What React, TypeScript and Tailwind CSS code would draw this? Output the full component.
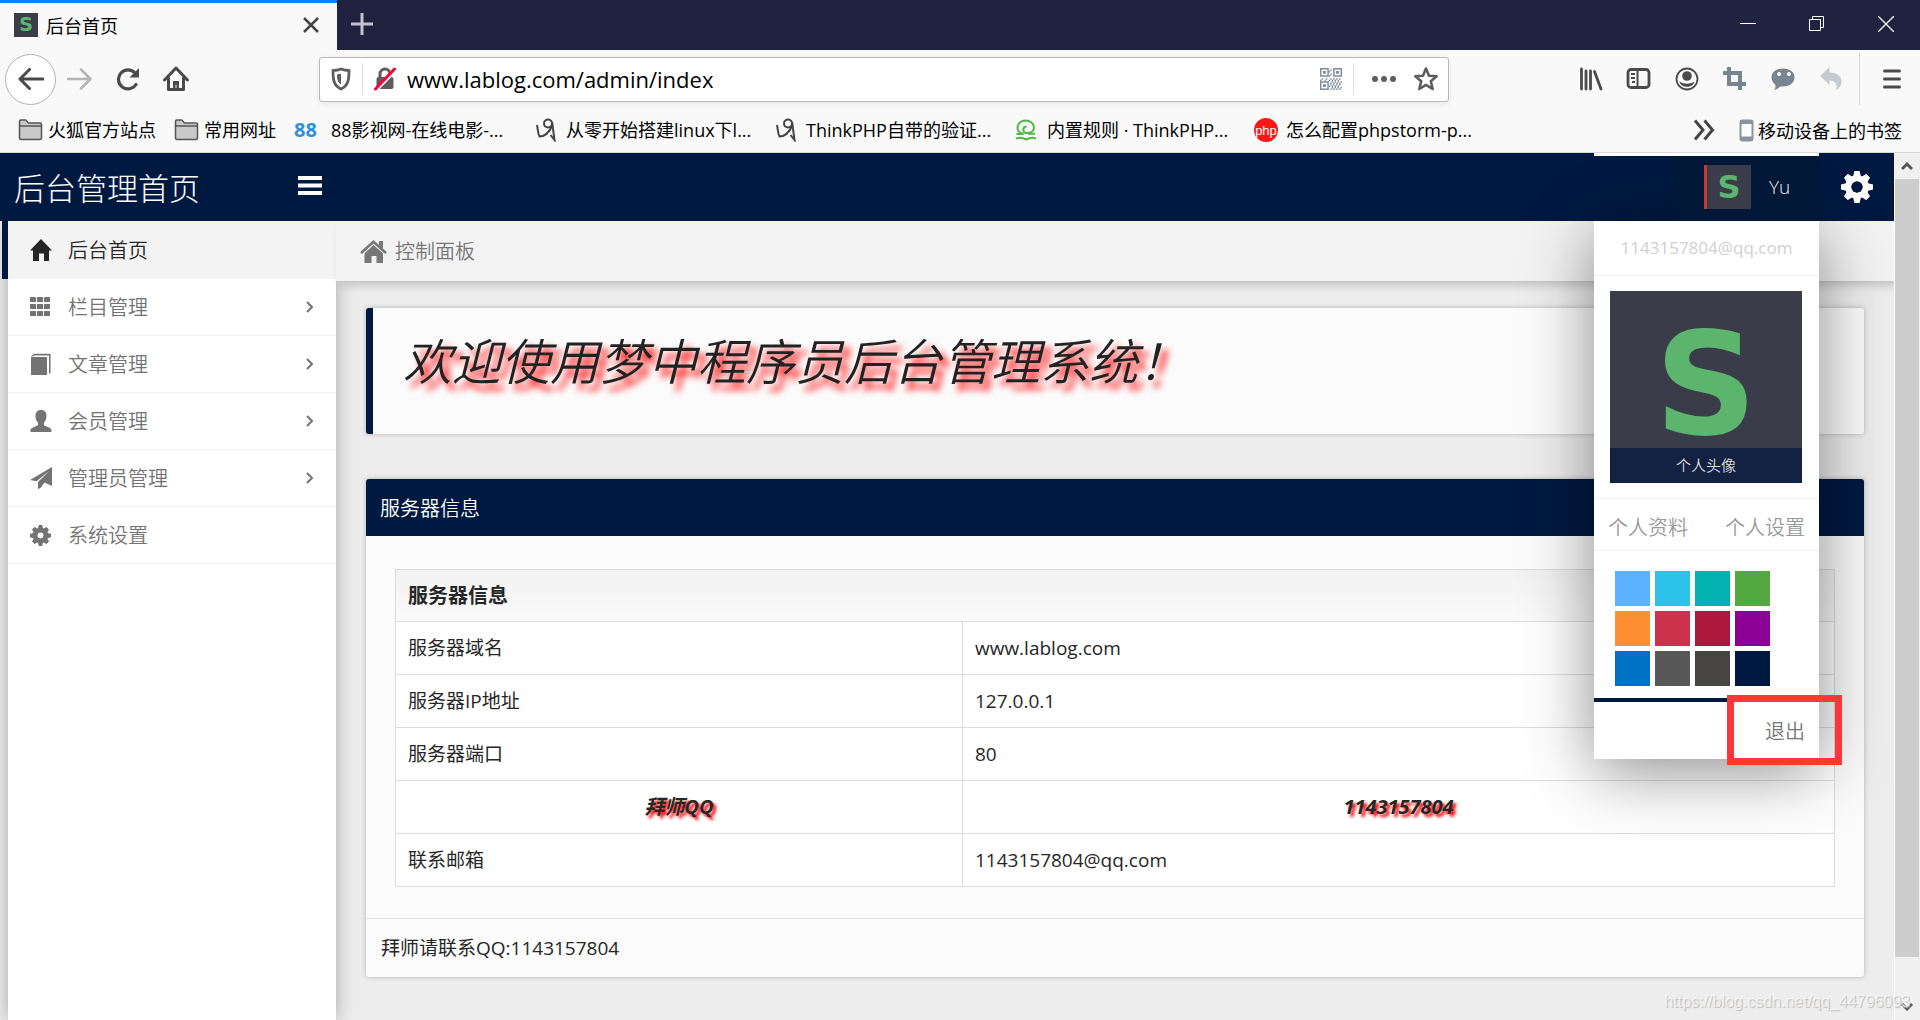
import type { ReactNode } from "react";

const latin = "font-['Open_Sans','Noto_Sans_CJK_SC',sans-serif]";

/* ---------- icons ---------- */

function Svg({ w, h, box, className, children }: { w: number; h: number; box?: string; className?: string; children: ReactNode }) {
  return (
    <svg width={w} height={h} viewBox={box ?? `0 0 ${w} ${h}`} className={className} fill="none" stroke="currentColor" aria-hidden="true">
      {children}
    </svg>
  );
}

function Gear({ size, hole }: { size: number; hole: number }) {
  return (
    <Svg w={size} h={size} box="-16 -16 32 32">
      <g fill="currentColor" stroke="none">
        {[0, 45, 90, 135].map((a) => (
          <path key={a} d="M-2.6-16h5.2l1.4 6V10l-1.4 6h-5.2L-4 10v-20z" transform={`rotate(${a})`} mask={`url(#hole${size})`} />
        ))}
      </g>
      <circle r={(11.8 + hole) / 2} strokeWidth={11.8 - hole} />
      <mask id={`hole${size}`} maskUnits="userSpaceOnUse" x="-16" y="-16" width="32" height="32">
        <rect x="-16" y="-16" width="32" height="32" fill="#fff" stroke="none" />
        <circle r={hole} fill="#000" stroke="none" />
      </mask>
    </Svg>
  );
}

const HomeSolid = () => (
  <Svg w={22} h={22}>
    <path d="M11 0l11 11.500h-3V22h-5v-7.500H9V22H3V11.500H0z" fill="currentColor" stroke="none" />
  </Svg>
);
const GridIcon = () => (
  <Svg w={22} h={22}>
    <g fill="currentColor" stroke="none">
      {[1, 8, 15].map((y) => [0, 7, 14].map((x) => <rect key={`${x}${y}`} x={x} y={y} width="6" height="5" rx="0.5" />))}
    </g>
  </Svg>
);
const BookIcon = () => (
  <Svg w={22} h={22}>
    <path d="M1 4h16v18H1zM1 3.500L4 .800h16.500v19l-1.500 1.200V2.500H4.500L2.500 3.500z" fill="currentColor" stroke="none" />
  </Svg>
);
const UserIcon = () => (
  <Svg w={22} h={22}>
    <path d="M11 0c3.500 0 5.500 2.300 5.500 6 0 3-.8 5-2.500 6.500V15c0 1 7.500 2.500 7.500 5v2H.5v-2C.5 17.500 8 16 8 15v-2.500C6.300 11 5.500 9 5.500 6c0-3.700 2-6 5.500-6z" fill="currentColor" stroke="none" />
  </Svg>
);
const PlaneIcon = () => (
  <Svg w={22} h={22}>
    <path d="M22 0v19l-7.500-3.500L10.500 21 8 22v-7L19 4 6.500 14.200 0 13z" fill="currentColor" stroke="none" />
  </Svg>
);
const Chevron = () => (
  <Svg w={8} h={12}>
    <path d="M1 1l5 5-5 5" strokeWidth="2" />
  </Svg>
);
const Folder = () => (
  <Svg w={25} h={22}>
    <path d="M1.500 6V2.500c0-.8.500-1.500 1.300-1.500h5c1 0 1.700 3 3 3H22c1 0 1.500.500 1.500 1.300V19c0 1-.5 1.500-1.500 1.500H3c-1 0-1.500-.5-1.500-1.500z" fill="#c9c9c9" stroke="#555" strokeWidth="1.500" />
    <path d="M1.500 7h22" stroke="#555" strokeWidth="1.500" />
  </Svg>
);
const FigureIcon = () => (
  <Svg w={22} h={24} className="text-[#444]">
    <circle cx="12" cy="5.500" r="4" strokeWidth="2" />
    <path d="M1 7c1 5 1 9 2.500 11.500C8 18.500 13 15 16.500 7l2 15-4-5" strokeWidth="2" />
  </Svg>
);
const Sprout = () => (
  <Svg w={22} h={22} className="text-[#4fb848]">
    <path d="M1.500 15H8.500C4.500 14 2.500 11 2.500 8.500 2.500 4.500 6 1.500 10.500 1.500S19 4.500 19 8.500 15.500 14 11.500 14 7 8 11.500 7.500" strokeWidth="2" />
    <path d="M1 19.500c4-1.500 7-.5 10 1 3-1.500 6-2.500 10-1M13 14.800h7" strokeWidth="2" />
  </Svg>
);
const Php = () => (
  <span className="flex size-6 items-center justify-center rounded-full bg-[#f81818] font-['Liberation_Sans',sans-serif] text-[13px] leading-none text-white">php</span>
);

/* ---------- logo tile ---------- */

function LogoTile({ className }: { className: string }) {
  return (
    <span className={`flex items-center justify-center bg-[#3b3c4a] font-['DejaVu_Sans',sans-serif] leading-none font-bold text-[#5bb56d] ${className}`}>S</span>
  );
}

/* ---------- browser window ---------- */

const bookmarks: { label: string; icon: ReactNode; width: string }[] = [
  { label: "火狐官方站点", icon: <Folder />, width: "w-[156px] gap-[5px]" },
  { label: "常用网址", icon: <Folder />, width: "w-[120px] gap-[5px]" },
  { label: "88影视网-在线电影-...", icon: <b className="text-xl font-bold text-[#2f8fdc]">88</b>, width: "w-[242px] gap-3.5" },
  { label: "从零开始搭建linux下l...", icon: <FigureIcon />, width: "w-[240px] gap-2" },
  { label: "ThinkPHP自带的验证...", icon: <FigureIcon />, width: "w-[239px] gap-2" },
  { label: "内置规则 · ThinkPHP...", icon: <Sprout />, width: "w-[239px] gap-2.5" },
  { label: "怎么配置phpstorm-p...", icon: <Php />, width: "w-[239px] gap-2" },
];

function IconButton({ label, children, className = "w-12" }: { label: string; children: ReactNode; className?: string }) {
  return (
    <button aria-label={label} className={`flex h-12 shrink-0 items-center justify-center ${className}`}>
      {children}
    </button>
  );
}

function TitleBar() {
  return (
    <div className="flex h-[50px] bg-[#202340] text-white">
      <div className="flex w-[337px] items-center border-t-3 border-[#0a84ff] bg-[#f9f9f9] pr-4.5 pb-1 pl-3.5 text-black">
        <LogoTile className="size-6 text-[19px]" />
        <span className="ml-2 flex-1 text-lg leading-6">后台首页</span>
        <button aria-label="关闭标签页">
          <Svg w={16} h={16} className="text-[#444]"><path d="M1 1l14 14M15 1L1 15" strokeWidth="2.500" /></Svg>
        </button>
      </div>
      <IconButton label="新建标签页" className="w-[50px]">
        <Svg w={22} h={22} className="text-[#c3c4cd]"><path d="M11 0v22M0 11h22" strokeWidth="3" /></Svg>
      </IconButton>
      <div className="ml-auto flex">
        <IconButton label="最小化" className="w-[69px]"><Svg w={16} h={16}><path d="M0 7.500h16" /></Svg></IconButton>
        <IconButton label="还原" className="w-[69px]"><Svg w={16} h={16}><path d="M.5 3.500h11v11H.5zM3.500 3.500v-3h11v11h-3" /></Svg></IconButton>
        <IconButton label="关闭" className="w-[69px]"><Svg w={16} h={16}><path d="M0 0l16 16M16 0L0 16" strokeWidth="1.300" /></Svg></IconButton>
      </div>
    </div>
  );
}

/* Three corner finders and a scatter of modules on a 15 x 15 field. */
const finders = [[0, 0], [9, 0], [0, 9]];
const modules = [[7, 1], [7, 4], [7, 7], [9, 7], [11, 7], [13, 7], [1, 7], [4, 7], [8, 9], [10, 9], [12, 9], [14, 9], [9, 11], [11, 11], [13, 11], [7, 11], [8, 13], [10, 13], [12, 13], [14, 13]];

function NavBar() {
  return (
    <div className="flex h-[58px] items-center pl-[5px] text-[#4a4a4a]">
      <button aria-label="后退" className="flex size-[51px] shrink-0 items-center justify-center rounded-full border border-[#b1b1b1] bg-white">
        <Svg w={26} h={22}><path d="M25 11H2M11.500 1.500L2 11l9.500 9.500" strokeWidth="3" strokeLinecap="round" strokeLinejoin="round" /></Svg>
      </button>
      <IconButton label="前进">
        <Svg w={26} h={22} className="text-[#b4b4b4]"><path d="M1 11h22M14 1.500l9.500 9.500-9.500 9.500" strokeWidth="2.500" strokeLinecap="round" strokeLinejoin="round" /></Svg>
      </IconButton>
      <IconButton label="刷新">
        <Svg w={24} h={24}><path d="M20 17.500A9.500 9.500 0 1 1 19 6" strokeWidth="3.200" strokeLinecap="round" /><path d="M23 1v9.500h-9.500z" fill="currentColor" stroke="none" /></Svg>
      </IconButton>
      <IconButton label="主页">
        <Svg w={26} h={26}><path d="M1.500 14L13 2l11.500 12M5.500 12v11.500h15V12" strokeWidth="3" strokeLinecap="round" strokeLinejoin="round" /><path d="M10 24v-9h6v9z" fill="currentColor" stroke="none" /><path d="M13 19v3" stroke="#fff" /></Svg>
      </IconButton>
      <div className="ml-[119px] flex h-[45px] w-[1130px] shrink items-center rounded-[3px] border border-[#b9b9b9] bg-white shadow-[0_2px_6px_rgba(0,0,0,0.07)]">
        <IconButton label="跟踪保护" className="w-[42px]">
          <Svg w={20} h={24} className="text-[#5d5d5d]"><path d="M10 2c3 1.300 5.500 1.500 8 1.500 0 9-.5 15-8 18.500C2.500 18.500 2 12.500 2 3.500c2.500 0 5-.2 8-1.500z" strokeWidth="2.800" strokeLinejoin="round" /><path d="M10 6.500v11C6.500 15 6 12 6 7.200 7.500 7.200 9 7 10 6.500z" fill="currentColor" stroke="none" /></Svg>
        </IconButton>
        <span className="h-8 w-px bg-[#dcdcdc]" />
        <IconButton label="站点信息" className="w-11">
          <Svg w={22} h={24} className="text-[#5d5d5d]"><path d="M6 11V7a5 5 0 0 1 10 0v4" strokeWidth="3" /><rect x="2.500" y="10" width="17" height="12" rx="2" fill="currentColor" stroke="none" /><path d="M2.500 23L22 3" stroke="#fff" strokeWidth="3" /><path d="M1.500 22L20.500 2" stroke="#ff0039" strokeWidth="3" strokeLinecap="round" /></Svg>
        </IconButton>
        <input aria-label="地址" defaultValue="www.lablog.com/admin/index" className={`min-w-0 flex-1 text-[22px] leading-8 text-black outline-none ${latin}`} />
        <IconButton label="二维码" className="w-11">
          <Svg w={22} h={22} box="0 0 15 15" className="text-[#7f8c9a]">
            <g fill="currentColor" stroke="none">
              {finders.map(([x, y]) => (
                <path key={`${x}-${y}`} fillRule="evenodd" d={`M${x} ${y}h6v6h-6zM${x + 1} ${y + 1}v4h4v-4zM${x + 2} ${y + 2}h2v2h-2z`} />
              ))}
              {modules.map(([x, y]) => (
                <path key={`${x}-${y}`} d={`M${x} ${y}h1v1h-1zM${x - 1} ${y + 1}h1v1h-1z`} />
              ))}
            </g>
          </Svg>
        </IconButton>
        <span className="h-8 w-px bg-[#dcdcdc]" />
        <IconButton label="页面操作" className="ml-2 w-11"><Svg w={24} h={8} className="text-[#5d5d5d]"><g fill="currentColor" stroke="none"><circle cx="3" cy="4" r="3" /><circle cx="12" cy="4" r="3" /><circle cx="21" cy="4" r="3" /></g></Svg></IconButton>
        <IconButton label="收藏" className="mr-0.5 w-10"><Svg w={26} h={26} className="text-[#5d5d5d]"><path d="M13 2.500l3 7.200 7.700.6-5.900 5 1.900 7.700-6.700-4.200L6.300 23l1.900-7.700-5.900-5L10 9.700z" strokeWidth="2.600" strokeLinejoin="round" /></Svg></IconButton>
      </div>
      <div className="ml-auto flex items-center">
        <IconButton label="书库"><Svg w={24} h={24}><path d="M2.500 2v20M7 4v18M11.500 4v18M15.500 4.500L22 22" strokeWidth="2.800" strokeLinecap="round" /></Svg></IconButton>
        <IconButton label="侧栏"><Svg w={26} h={24}><rect x="2" y="2.500" width="21" height="18" rx="3" strokeWidth="2.800" /><path d="M11.500 2v19" strokeWidth="2" /><path d="M5 7h4M5 11h4M6 15h3" strokeWidth="1.800" /></Svg></IconButton>
        <IconButton label="账户"><Svg w={24} h={24}><circle cx="12" cy="12" r="10.500" strokeWidth="1.800" /><circle cx="12" cy="9" r="4.800" fill="currentColor" stroke="none" /><path d="M4.500 14.500c5 3 10 3 15 0-1.500 7-13.500 7-15 0z" fill="currentColor" stroke="none" /></Svg></IconButton>
        <IconButton label="截图"><Svg w={24} h={24} className="text-[#778592]"><path d="M0 6h17v17M6 0v17h17" strokeWidth="4" /></Svg></IconButton>
        <IconButton label="聊天"><Svg w={24} h={24} className="text-[#778592]"><path d="M12 1.500c7 0 11.500 3.600 11.500 8.800S19 19.500 12 19.500c-1 0-2 0-3 0-1.500 1.700-3.500 3-6 3.500 1.300-1.500 1.700-3 1.500-5C2 16 .5 13.500.5 10.300.5 5.100 5 1.500 12 1.500z" fill="currentColor" stroke="none" /><circle cx="8" cy="7" r="2" fill="#fff" stroke="none" /><circle cx="18" cy="7" r="2" fill="#fff" stroke="none" /></Svg></IconButton>
        <IconButton label="撤销"><Svg w={24} h={24} className="text-[#c6cbd0]"><path d="M1 9l9.500-9v5.500C18 5.500 22.500 9 22.500 15c0 3.500-2 6.500-5.500 8 2-6-1-9.500-6.500-9.500V18z" fill="currentColor" stroke="none" /></Svg></IconButton>
        <span className="mx-1 h-[52px] w-px bg-[#dcdcdc]" />
        <IconButton label="菜单" className="w-14"><Svg w={18} h={20}><path d="M1.500 2h15M1.500 10h15M1.500 18h15" strokeWidth="3" strokeLinecap="round" /></Svg></IconButton>
      </div>
    </div>
  );
}

function BookmarksBar() {
  return (
    <div className="flex h-[45px] items-center border-b border-[#d9d9d9] pr-4.5 pl-4.5 text-lg leading-6 whitespace-nowrap text-black">
      {bookmarks.map((b) => (
        <a key={b.label} href="#" className={`flex items-center ${b.width} ${latin}`}>
          {b.icon}
          <span>{b.label}</span>
        </a>
      ))}
      <button aria-label="更多书签" className="ml-auto"><Svg w={22} h={22} className="text-[#444]"><path d="M2 1.500l8 9.500-8 9.500M11.500 1.500l8 9.500-8 9.500" strokeWidth="3" /></Svg></button>
      <a href="#" className="ml-6 flex items-center gap-1">
        <Svg w={15} h={23} className="text-[#8b949c]"><rect x="1.500" y="1.500" width="12" height="20" rx="2" strokeWidth="2" fill="#fff" /><path d="M1 3h13M1 19.500h13" strokeWidth="4" /></Svg>
        移动设备上的书签
      </a>
    </div>
  );
}

/* ---------- admin page ---------- */

const menu = [
  { label: "后台首页", icon: <HomeSolid />, active: true, more: false },
  { label: "栏目管理", icon: <GridIcon />, active: false, more: true },
  { label: "文章管理", icon: <BookIcon />, active: false, more: true },
  { label: "会员管理", icon: <UserIcon />, active: false, more: true },
  { label: "管理员管理", icon: <PlaneIcon />, active: false, more: true },
  { label: "系统设置", icon: <Gear size={21} hole={5} />, active: false, more: false },
];

function Sidebar() {
  return (
    <nav className="ml-2 w-[328px] shrink-0 bg-white text-xl leading-7 font-[350] text-[#737373] shadow-[0_0_18px_rgba(0,0,0,0.3)]">
      {menu.map((m) => (
        <a
          key={m.label}
          href="#"
          className={
            m.active
              ? "relative flex h-[58px] items-center bg-[#f3f3f3] pl-[22px] text-[#262626] before:absolute before:inset-y-0 before:-left-1.5 before:w-1.5 before:bg-[#001940]"
              : "flex h-[57px] items-center border-b border-[#f0f0f0] pr-[22px] pl-[22px]"
          }
        >
          <span className="w-[38px] text-current">{m.icon}</span>
          <span className="flex-1">{m.label}</span>
          {m.more && <Chevron />}
        </a>
      ))}
    </nav>
  );
}

const swatches = [
  "bg-[#5db2ff]", "bg-[#2dc3e8]", "bg-[#03b3b2]", "bg-[#53a93f]",
  "bg-[#ff8f32]", "bg-[#cc324b]", "bg-[#ac193d]", "bg-[#8c0095]",
  "bg-[#0072c6]", "bg-[#585858]", "bg-[#474544]", "bg-[#001940]",
];

function UserMenu() {
  return (
    <div className="absolute top-full right-[75px] z-20 w-[225px] bg-white shadow-[0_12px_64px_rgba(0,0,0,0.45)]">
      <p className={`flex h-[55px] items-center justify-center border-b border-[#f0f0f0] text-[17px] text-[#d0d0d0] ${latin}`}>1143157804@qq.com</p>
      <figure className="px-4 py-[15px]">
        <div className="flex h-[157px] w-[192px] items-end bg-[#3b3c4a]">
          <LogoTile className="h-[127px] w-full text-[142px]" />
        </div>
        <figcaption className="flex h-[35px] w-[192px] items-center justify-center bg-[#132243] text-[15px] font-[350] text-[#dcdcdc]">个人头像</figcaption>
      </figure>
      <div className="flex h-[53px] items-center justify-between border-y border-[#f0f0f0] px-3.5 pt-1 text-xl font-[350] text-[#999]">
        <a href="#">个人资料</a>
        <a href="#">个人设置</a>
      </div>
      <div className="grid w-fit grid-cols-4 gap-[5px] pt-5 pb-3 pl-[21px]">
        {swatches.map((s) => (
          <button key={s} aria-label="主题颜色" className={`size-[35px] ${s}`} />
        ))}
      </div>
      <div className="relative flex h-[61px] items-center justify-end border-t-4 border-[#001940] pr-3.5 text-xl font-[350] text-[#777]">
        <a href="#">退出</a>
        <span className="pointer-events-none absolute -top-[7px] left-[133px] h-[70px] w-[115px] border-7 border-[#fb3838]" />
      </div>
    </div>
  );
}

function PageHeader() {
  return (
    <header className="relative z-20 flex h-[68px] shrink-0 items-center bg-[#001940] text-white">
      <h1 className="w-[282px] pl-3.5 text-[31px] leading-10 font-light">后台管理首页</h1>
      <button aria-label="折叠菜单" className="ml-4">
        <Svg w={24} h={22}><path d="M0 2h24M0 9.500h24M0 17h24" strokeWidth="4" /></Svg>
      </button>
      <UserMenu />
      <div className="relative z-30 ml-auto flex h-full items-center bg-[#001738]">
        <span className="absolute top-0 right-0 h-[3px] w-[225px] bg-white" />
        <button className="flex h-full w-[145px] items-center gap-4.5 pl-[30px]">
          <LogoTile className="h-11 w-[47px] border-l-3 border-[#c8382c] text-[32px]" />
          <span className={`text-[19px] font-light text-[#eceef1] ${latin}`}>Yu</span>
        </button>
      </div>
      <button aria-label="设置" className="flex w-[75px] justify-center"><Gear size={32} hole={6} /></button>
    </header>
  );
}

const rows = [
  { name: "服务器域名", value: "www.lablog.com", strong: false },
  { name: "服务器IP地址", value: "127.0.0.1", strong: false },
  { name: "服务器端口", value: "80", strong: false },
  { name: "拜师QQ", value: "1143157804", strong: true },
  { name: "联系邮箱", value: "1143157804@qq.com", strong: false },
];

function ServerTable() {
  return (
    <table className={`w-full table-fixed border-collapse border border-[#dcdcdc] bg-white text-left leading-7 text-[#262626] ${latin}`}>
      <colgroup>
        <col className="w-[39.4%]" />
        <col />
      </colgroup>
      <thead>
        <tr className="h-[52px] border-b border-[#dcdcdc] bg-linear-to-b from-[#f2f2f2] to-[#fafafa]">
          <th colSpan={2} className="px-3 text-xl font-bold">服务器信息</th>
        </tr>
      </thead>
      <tbody>
        {rows.map((r) => (
          <tr key={r.name} className="h-[53px] border-b border-[#dcdcdc]">
            {[r.name, r.value].map((t) => (
              <td key={t} className={r.strong ? "border-r border-[#dcdcdc] px-3 text-center text-xl font-bold italic [text-shadow:3px_3px_3px_#f00]" : "border-r border-[#dcdcdc] px-3 text-[19px]"}>{t}</td>
            ))}
          </tr>
        ))}
      </tbody>
    </table>
  );
}

function Main() {
  return (
    <main className="relative min-w-0 flex-1">
      <div className="relative z-10 flex h-[60px] items-center gap-2 bg-[#f3f3f3] pl-[24px] text-xl leading-7 font-[350] text-[#777] shadow-[6px_3px_10px_rgba(0,0,0,0.22)]">
        <Svg w={27} h={23}>
          <path d="M1 13L13.500 1.800 26 13" strokeWidth="2.500" />
          <path d="M19 1h4v8l-4-3.500zM13.500 5L23 13.500V23h-6.500v-7h-5v7H4.500v-9.500z" fill="currentColor" stroke="none" />
        </Svg>
        控制面板
      </div>
      <div className="flex flex-col gap-[45px] py-[27px] pr-[30px] pl-[30px]">
        <section className="h-[126px] rounded-[3px] border-l-7 border-[#001940] bg-[#fbfbfb] pt-4 pl-[30px] shadow-[0_0_5px_rgba(0,0,0,0.25)]">
          <h2 className="text-[49px] leading-[70px] font-[350] text-[#222] italic [text-shadow:6px_7px_7px_#f00]">欢迎使用梦中程序员后台管理系统！</h2>
        </section>
        <section className="overflow-hidden rounded-[3px] bg-[#fbfbfb] shadow-[0_0_5px_rgba(0,0,0,0.25)]">
          <h3 className="flex h-[57px] items-center bg-[#001940] pl-3.5 text-xl leading-7 font-[350] text-white">服务器信息</h3>
          <div className="px-[29px] pt-[33px] pb-[31px]">
            <ServerTable />
          </div>
          <p className={`flex h-[59px] items-center border-t border-[#e2e2e2] pl-[15px] text-[19px] leading-7 text-[#262626] ${latin}`}>拜师请联系QQ:1143157804</p>
        </section>
      </div>
    </main>
  );
}

function ScrollBar() {
  return (
    <div className="flex w-[26px] shrink-0 flex-col border-l border-white bg-[#f0f0f0] pr-px text-[#555]">
      <button aria-label="向上滚动" className="flex h-[26px] items-center justify-center"><Svg w={12} h={10}><path d="M1 8l5-5 5 5" strokeWidth="3" /></Svg></button>
      <div className="flex-[778] bg-[#cdcdcd]" />
      <div className="flex-[37]" />
      <button aria-label="向下滚动" className="flex h-[26px] items-center justify-center"><Svg w={12} h={10}><path d="M1 2l5 5 5-5" strokeWidth="3" /></Svg></button>
    </div>
  );
}

export default function App() {
  return (
    <div className="flex min-h-screen flex-col overflow-hidden bg-[#f9f9f9] font-['Noto_Sans_CJK_SC',sans-serif]">
      <TitleBar />
      <NavBar />
      <BookmarksBar />
      <div className="relative flex flex-1">
        <div className="flex min-w-0 flex-1 flex-col overflow-hidden bg-[#ededed]">
          <PageHeader />
          <div className="flex flex-1">
            <Sidebar />
            <Main />
          </div>
        </div>
        <ScrollBar />
        <span className="absolute right-2.5 bottom-1.5 font-['Liberation_Sans',sans-serif] text-base leading-6 text-white/60 [text-shadow:1px_1px_1px_#bbb]">https://blog.csdn.net/qq_44796093</span>
      </div>
    </div>
  );
}
